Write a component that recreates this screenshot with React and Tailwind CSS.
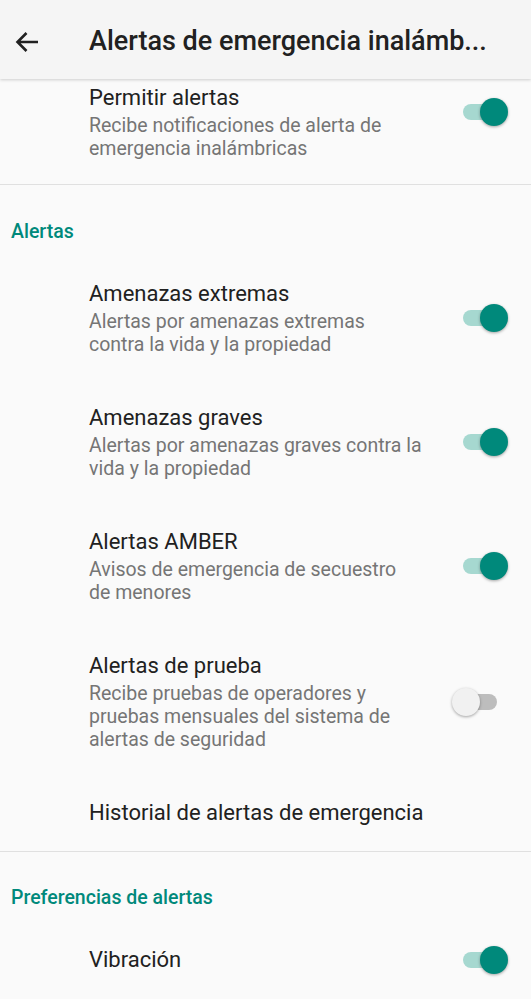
import React from "react";

function Toggle({ on }) {
  return (
    <div className="relative w-[56px] h-[28px] shrink-0">
      <div
        className={
          "absolute left-[11px] top-[6px] w-[34px] h-[16px] rounded-full " +
          (on ? "bg-[#a6d8d0]" : "bg-[#bdbdbd]")
        }
      />
      <div
        className={
          "absolute top-0 w-[28px] h-[28px] rounded-full shadow-[0_1px_3px_rgba(0,0,0,0.35)] " +
          (on ? "left-[28px] bg-[#00897b]" : "left-0 bg-[#f1f1f1]")
        }
      />
    </div>
  );
}

function Item({ title, lines = [], toggle, pt = "pt-[24px]", toggleClass = "" }) {
  return (
    <div className={"flex items-center pl-[89px] pr-[23px] pb-[24px] " + pt}>
      <div className="flex-1 min-w-0">
        <div className="text-[22px] leading-[28px] text-[#212121]">{title}</div>
        {lines.length > 0 && (
          <div className="mt-[2px] text-[19.5px] leading-[23px] text-[#757575]">
            {lines.map((l, i) => (
              <div key={i}>{l}</div>
            ))}
          </div>
        )}
      </div>
      {toggle !== undefined && (
        <div className={"ml-[16px] " + toggleClass}>
          <Toggle on={toggle} />
        </div>
      )}
    </div>
  );
}

function Category({ children, pt }) {
  return (
    <div className={"pl-[11px] pb-[12px] text-[19.5px] leading-[24px] font-medium text-[#00897b] " + pt}>
      {children}
    </div>
  );
}

export default function App() {
  return (
    <div
      className="w-[531px] h-[999px] overflow-hidden bg-[#fafafa]"
      style={{ fontFamily: "Roboto, 'Noto Sans', sans-serif" }}
    >
      <div className="relative z-10 h-[79px] bg-[#f5f5f5] flex items-center pt-[4px] shadow-[0_1px_3px_rgba(0,0,0,0.18)]">
        <div className="w-[89px] flex items-center pl-[15px]">
          <svg width="24" height="24" viewBox="0 0 24 24" fill="none">
            <path
              d="M23 12H2.5M11.5 3L2.5 12L11.5 21"
              stroke="#212121"
              strokeWidth="2.6"
              strokeLinecap="butt"
              strokeLinejoin="miter"
            />
          </svg>
        </div>
        <div className="text-[27px] font-medium text-[#212121] whitespace-nowrap">
          Alertas de emergencia inalámb...
        </div>
      </div>

      <Item
        pt="pt-[5px]"
        title="Permitir alertas"
        lines={["Recibe notificaciones de alerta de", "emergencia inalámbricas"]}
        toggle={true}
        toggleClass="-mt-[20px]"
      />
      <div className="h-px bg-[#e0e0e0]" />

      <Category pt="pt-[35px]">Alertas</Category>
      <Item
        title="Amenazas extremas"
        lines={["Alertas por amenazas extremas", "contra la vida y la propiedad"]}
        toggle={true}
      />
      <Item
        title="Amenazas graves"
        lines={["Alertas por amenazas graves contra la", "vida y la propiedad"]}
        toggle={true}
      />
      <Item
        title="Alertas AMBER"
        lines={["Avisos de emergencia de secuestro", "de menores"]}
        toggle={true}
      />
      <Item
        title="Alertas de prueba"
        lines={[
          "Recibe pruebas de operadores y",
          "pruebas mensuales del sistema de",
          "alertas de seguridad",
        ]}
        toggle={false}
      />
      <Item title="Historial de alertas de emergencia" />
      <div className="h-px bg-[#e0e0e0]" />

      <Category pt="pt-[34px]">Preferencias de alertas</Category>
      <Item title="Vibración" toggle={true} />
    </div>
  );
}
